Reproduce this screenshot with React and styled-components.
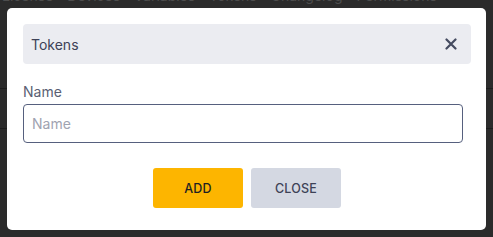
import React from "react";
import styled, { createGlobalStyle } from "styled-components";

const GlobalStyle = createGlobalStyle`
    html, body {
        margin: 0;
        padding: 0;
        background: #2b2b2b;
        overflow: hidden;
    }
    body {
        font-family: "Inter", "DejaVu Sans", sans-serif;
    }
`;

const Page = styled.div`
    position: relative;
    width: 493px;
    height: 237px;
    overflow: hidden;
    background: #2b2b2b;
`;

const Nav = styled.div`
    display: flex;
    gap: 14px;
    margin-top: -12px;
    padding-left: 2px;
    font-size: 14px;
    line-height: 16px;
    color: #4d4d4d;
    white-space: nowrap;
`;

const Row = styled.div`
    height: ${(props) => props.h}px;
    border-bottom: 1px solid #1d1d1d;
`;

const Overlay = styled.div`
    position: absolute;
    inset: 0;
    display: flex;
    justify-content: center;
    padding-top: 8px;
`;

const Modal = styled.div`
    box-sizing: border-box;
    width: 479px;
    height: 222px;
    background: #ffffff;
    border-radius: 5px;
    padding: 16px 15px 0 16px;
    display: flex;
    flex-direction: column;
`;

const Header = styled.div`
    height: 40px;
    background: #ebecf1;
    border-radius: 4px;
    display: flex;
    align-items: center;
    justify-content: space-between;
    padding: 0 14px 0 8px;
`;

const Title = styled.span`
    font-size: 14px;
    color: #3d4257;
`;

const CloseIcon = styled.button`
    border: none;
    background: none;
    padding: 0;
    display: flex;
    color: #454b60;
    cursor: pointer;
`;

const Field = styled.label`
    display: flex;
    flex-direction: column;
    margin-top: 19px;
    width: 440px;
`;

const Label = styled.span`
    font-size: 14px;
    line-height: 17px;
    color: #5a5f73;
    margin-bottom: 4px;
`;

const Input = styled.input`
    box-sizing: border-box;
    height: 39px;
    border: 1px solid #56607e;
    border-radius: 4px;
    padding: 0 8px;
    font-family: inherit;
    font-size: 14px;
    color: #3d4257;
    outline: none;
    &::placeholder {
        color: #9fa3b1;
    }
`;

const Actions = styled.div`
    display: flex;
    justify-content: center;
    gap: 8px;
    margin-top: 25px;
`;

const Button = styled.button`
    width: 90px;
    height: 40px;
    border: none;
    border-radius: 3px;
    font-family: inherit;
    font-size: 12.5px;
    font-weight: 500;
    letter-spacing: 0.2px;
    text-transform: uppercase;
    background: ${(props) => (props.primary ? "#fdb500" : "#d4d8e2")};
    color: ${(props) => (props.primary ? "#1f1f22" : "#3d4257")};
    cursor: pointer;
`;

export default function App() {
    return (
        <Page>
            <GlobalStyle />
            <Nav>
                <span>License</span>
                <span>Devices</span>
                <span>Variables</span>
                <span>Tokens</span>
                <span>Changelog</span>
                <span>Permissions</span>
            </Nav>
            <Row h={84} />
            <Row h={39} />
            <Overlay>
                <Modal>
                    <Header>
                        <Title>Tokens</Title>
                        <CloseIcon aria-label="close">
                            <svg width="12" height="12" viewBox="0 0 12 12">
                                <path
                                    d="M1.5 1.5L10.5 10.5M10.5 1.5L1.5 10.5"
                                    stroke="currentColor"
                                    strokeWidth="2.2"
                                    strokeLinecap="round"
                                />
                            </svg>
                        </CloseIcon>
                    </Header>
                    <Field>
                        <Label>Name</Label>
                        <Input placeholder="Name" />
                    </Field>
                    <Actions>
                        <Button primary>Add</Button>
                        <Button>Close</Button>
                    </Actions>
                </Modal>
            </Overlay>
        </Page>
    );
}
